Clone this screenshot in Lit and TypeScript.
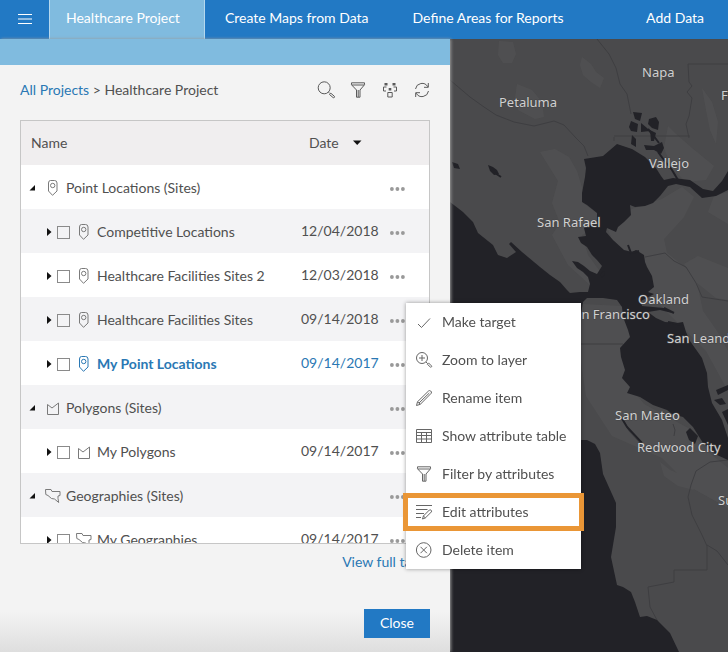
import { LitElement, html, css, svg, nothing } from "lit";
import { customElement, property, state } from "lit/decorators.js";

type Shape = "pin" | "polygon" | "geography";

interface Row {
  name: string;
  shape: Shape;
  group?: boolean;
  date?: string;
  target?: boolean;
}

const ROWS: Row[] = [
  { name: "Point Locations (Sites)", shape: "pin", group: true },
  { name: "Competitive Locations", shape: "pin", date: "12/04/2018" },
  { name: "Healthcare Facilities Sites 2", shape: "pin", date: "12/03/2018" },
  { name: "Healthcare Facilities Sites", shape: "pin", date: "09/14/2018" },
  { name: "My Point Locations", shape: "pin", date: "09/14/2017", target: true },
  { name: "Polygons (Sites)", shape: "polygon", group: true },
  { name: "My Polygons", shape: "polygon", date: "09/14/2017" },
  { name: "Geographies (Sites)", shape: "geography", group: true },
  { name: "My Geographies", shape: "geography", date: "09/14/2017" },
];

const GLYPHS = {
  pin: svg`<path d="M5.500 .5h4Q12 .5 12 3v8L7.500 15.300 3.500 11V3Q3.500 .5 5.500 .5z"/><circle cx="7.700" cy="5.500" r="2.200"/>`,
  polygon: svg`<path d="M2.500 14.500V4.500L7 8 13.500 3v11.500z"/>`,
  geography: svg`<path d="M.5 1.500H6l1 2h8v4l-2 .5v2.500l.7 4-4.200-3.500-3-.5L3 7.500.8 6.500z"/>`,
  caretRight: svg`<path class="solid" d="M5 4l4.500 4L5 12z"/>`,
  caretCorner: svg`<path class="solid" d="M10 5v5.500H4.500z"/>`,
  caretDown: svg`<path class="solid" d="M4 5.500h8.500L8.200 10z"/>`,
  dots: svg`<circle class="solid" cx="1.900" cy="9" r="1.900"/><circle class="solid" cx="7.400" cy="9" r="1.900"/><circle class="solid" cx="12.900" cy="9" r="1.900"/>`,
  search: svg`<circle cx="6.200" cy="5.800" r="6"/><path d="M10.500 10.200l1.300 1.300M11.500 12.500l1.300-1.300 3.500 3q.5.800 0 1.300t-1.300 0z"/>`,
  filter: svg`<path d="M1.500.8h13v2L10 8v7.200H6.500V8L1.500 2.800zM2 3h12M8.200 8v7"/>`,
  nodes: svg`<path d="M5.800 10.500h4.400v4.500H5.800zM4.500 5H1.500v4H4M11.500 5h3v4H12"/><path class="solid" d="M2.500 1h3v2.500h-3zM10.500 1h3v2.500h-3zM6.700 6h2.600v2.500H6.700z"/>`,
  refresh: svg`<path d="M1.500 7A6.600 6.600 0 0 1 13.800 4.800M14.500 9A6.600 6.600 0 0 1 2.200 11.200M14.300 1v4.300H10M1.700 15v-4.300H6"/>`,
  menu: svg`<path d="M1 2.500h14M1 7h14M1 11.500h14"/>`,
  check: svg`<path d="M2 10l3.500 3.500L14 4.500"/>`,
  zoom: svg`<circle cx="6" cy="6" r="5.500"/><path d="M3 6h6M6 3v6M10 10l1.500 1.500M11.300 12.200l1.200-1.300 3 3q.4.600-.1 1.100t-1.100 0z"/>`,
  pencil: svg`<path d="M.5 15.500l1-3.700L12.500 1q1-.9 2.200 0t.6 2.200L4.300 14.300zM1.500 11.800l2.800 2.500M3 13L13.300 3"/>`,
  table: svg`<path d="M.5 1.500h15v13H.5zM.5 4.500h15M.5 7.500h15M.5 11h15M5.500 4.500v10M10.500 4.500v10"/>`,
  edit: svg`<path d="M0 1.500h16M0 5.500h11.500M0 9.500h8M0 13.500h5M6.500 15l.9-3 6-6q.8-.5 1.700.2t.3 1.700l-6 6zM7.400 12l2 1.900"/>`,
  remove: svg`<circle cx="7.700" cy="8" r="7.300"/><path d="M4.500 4.800l6.400 6.400M10.900 4.800l-6.400 6.400"/>`,
};

type Glyph = keyof typeof GLYPHS;

@customElement("line-icon")
class LineIcon extends LitElement {
  @property() name: Glyph = "pin";

  static styles = css`
    :host {
      display: block;
      flex: none;
      width: 16px;
      height: 16px;
    }
    .glyph {
      display: block;
      width: 100%;
      height: 100%;
      fill: none;
      stroke: currentColor;
      stroke-width: 1;
      overflow: visible;
    }
    .solid {
      fill: currentColor;
      stroke: none;
    }
  `;

  render() {
    return html`<svg class="glyph" viewBox="0 0 16 16" aria-hidden="true">${GLYPHS[this.name]}</svg>`;
  }
}

const CITIES = [
  { name: "Napa", x: 642, y: 77 },
  { name: "Petaluma", x: 499, y: 107 },
  { name: "Fairfield", x: 721, y: 100 },
  { name: "Vallejo", x: 649, y: 168 },
  { name: "San Rafael", x: 537, y: 227 },
  { name: "Oakland", x: 638, y: 304 },
  { name: "San Francisco", x: 567, y: 319 },
  { name: "San Leandro", x: 667, y: 343 },
  { name: "San Mateo", x: 615, y: 420 },
  { name: "Redwood City", x: 637, y: 452 },
  { name: "Sunnyvale", x: 718, y: 505 },
];

@customElement("bay-map")
class BayMap extends LitElement {
  static styles = css`
    :host {
      display: block;
      position: relative;
      overflow: hidden;
      background: #4a4a4c;
    }
    .canvas {
      position: absolute;
      inset: 0;
      width: 100%;
      height: 100%;
    }
    .urban {
      fill: #535355;
      opacity: 0.6;
    }
    .water {
      fill: #222227;
    }
    .ink {
      fill: none;
      stroke: #222227;
      stroke-width: 2;
    }
    .border {
      fill: none;
      stroke: #3e3e41;
      stroke-width: 1;
    }
    .city {
      font: 13px "Noto Sans", "Open Sans", sans-serif;
      fill: #d0d0d0;
      stroke: #444446;
      stroke-width: 1;
      paint-order: stroke;
    }
  `;

  render() {
    return html`
      <svg class="canvas" viewBox="450 39 278 613" preserveAspectRatio="xMinYMin slice" role="img" aria-label="San Francisco Bay Area">
        <path class="urban" d="M499 41l14 1 3 12-4 9-9 0-5-8zM582 57l9 7 5 8 8 6-4 10-9-6-8-7-3-10zM517 84l15 6 10 12 2 15-9 2-17-9-3-12zM540 152l15-3 14 8 8 14 6 20 0 12 14 10-1 14-14 8 6 20 16 22-14 8-22-20-16-30 8-12-8-20 6-22zM702 88l10 14 6 20-2 22-6-14-4-20zM668 126l8 8 16 14 22 18-8 14-20 2-14-14-8-20z"/>
        <path class="urban" d="M608 229l24-20 30-10 20-12 12 10-10 20-20 22 3 14 20 16 10 14 6 28 14 20 11 20v40l-22-40-60-60-30-40zM728 268l-30-12-14 8 12 18 20 16 12 2zM728 192l-14 4-6 16 20 12zM582 304l40 2 10 34-8 40 20 24 44 24 20 24 20 16v40l-36-20-30-30-50-22-26-40-6-40zM660 462l10 8 14 6 10 14-16-4-14-10z"/>
        <path class="border" d="M450 80l20 17 14 10 12 8 18 7 20 4 20-5 10 4 12 13 8 8 4 10M597 39l12 15 7 14 4 16 7 10 4 20M728 64h-40l1 18 3 4-5 6 5 6-3 18-3 8 3 14M614 136h76M614 137v4M581 344h42M645 257l20-4 9 8 12 6 10 16 6 14 26 4M646 322l8 16"/>
        <path class="border" d="M728 460l-18 2-14 9-5 14-3 12 4 18 10 20 5 11v24h-33v12l-26 5 2 20 14 26M707 545l10 6 11 14M624 421l5 10 14 15M673 424l2 6-1 6"/>
        <path class="water" d="M450 202L463 212 473 222 478 233 493 245 498 255 507 258 516 252 509 244 511 242 522 252 528 257 540 267 550 275 560 282 567 290 570 293 580 292 588 292 590 284 588 277 583 272 577 268 572 261 578 262 584 266 590 271 597 274 602 266 597 260 592 255 587 247 581 243 578 237 586 236 584 228 597 221 597 213 587 205 582 202 582 193 585 177 586 168 584 159 603 156 617 144 632 149 645 157 656 168 661 176 664 180 673 178 690 180 703 189 713 191 722 181 728 171 728 190 716 196 702 198 690 187 676 184 668 186 660 196 653 203 645 206 635 207 630 205 631 215 624 222 618 227 616 232 607 228 606 232 613 240 624 250 632 252 636 250 644 255 645 262 647 267 652 276 654 287 648 292 654 294 641 301 642 306 664 308 672 313 660 310 648 312 656 318 665 322 677 323 683 322 686 332 690 341 702 358 707 373 708 387 712 403 722 420 728 438 728 460 717 455 703 443 693 427 683 417 672 414 667 410 653 405 640 397 627 393 630 387 622 378 625 370 621 357 620 348 630 337 628 330 623 317 622 307 617 300 603 298 587 298 583 302 580 320 580 440 587 440 595 444 600 453 603 474 612 494 616 503 616 527 611 557 617 585 623 587 631 592 635 602 640 617 647 616 657 620 670 633 679 652 450 652z"/>
        <path class="water" d="M633 112l9 1-2 8-5-2zM631 121l7 3-1 8-6-1-2-4zM641 123l6 5 3 3-9 1zM649 119l7-2 3 5-1 8-6-2-4-4zM650 130l6 3-2 8-3 0zM632 135l4 4 0 8-5-3zM644 145l10 1 8-4 2 6-3 6-7-4-8 0zM716 390l12-5v5l-10 5zM714 400l8-2 4 6-6 1zM722 412l6-3v16zM686 432l4-4 8 8-3 8-6-4zM452 162l6 2 2 5-6-1zM488 165l5 2 4 3 2 4-5 1-4-4zM600 274l4-3 1 3-3 4z"/>
        <path class="ink" d="M648 129l5 6 6 8M658 152l6 8 8 10 6 10M621 417l6 10 15 16M495 173l6 4M664 308l10 5M668 322l14 3M628 245l3 8 8-2"/>
        ${CITIES.map((c) => svg`<text class="city" x=${c.x} y=${c.y}>${c.name}</text>`)}
      </svg>
    `;
  }
}

const ACTIONS: { label: string; icon: Glyph; marked?: boolean }[] = [
  { label: "Make target", icon: "check" },
  { label: "Zoom to layer", icon: "zoom" },
  { label: "Rename item", icon: "pencil" },
  { label: "Show attribute table", icon: "table" },
  { label: "Filter by attributes", icon: "filter" },
  { label: "Edit attributes", icon: "edit", marked: true },
  { label: "Delete item", icon: "remove" },
];

const TOOLS: { label: string; icon: Glyph }[] = [
  { label: "Search", icon: "search" },
  { label: "Filter", icon: "filter" },
  { label: "Group", icon: "nodes" },
  { label: "Refresh", icon: "refresh" },
];

@customElement("app-root")
class AppRoot extends LitElement {
  @state() private menuOpen = true;

  static styles = css`
    :host {
      display: flex;
      flex-direction: column;
      min-height: 100vh;
      overflow: hidden;
      font: 14px/20px Lato, "Open Sans", sans-serif;
      color: #505050;
      background: #f3f3f3;
    }
    * {
      box-sizing: border-box;
    }
    button {
      font: inherit;
      color: inherit;
      background: none;
      border: 0;
      padding: 0;
      cursor: pointer;
    }
    a {
      color: #2a78b4;
      text-decoration: none;
    }
    .bar {
      display: flex;
      height: 39px;
      background: #2279c4;
      color: #fff;
    }
    .burger {
      display: grid;
      place-items: center;
      width: 49px;
    }
    .tabs {
      display: flex;
      flex: 1;
    }
    .tab {
      padding: 8px 24px 0 20px;
      color: #fff;
      white-space: nowrap;
    }
    .tab.current {
      padding-left: 16px;
      background: #80bbdf;
      border: 1px solid #b5d8ee;
      border-width: 0 1px;
    }
    .tab.last {
      margin-left: auto;
    }
    .body {
      flex: 1;
      display: grid;
      grid-template-columns: minmax(0, 450px) minmax(0, 1fr);
    }
    .panel {
      position: relative;
      z-index: 1;
      display: flex;
      flex-direction: column;
      border-top: 26px solid #80bbdf;
      background: linear-gradient(to top, #dedede, #f3f3f3 40px);
      box-shadow: 1px 0 3px #9a9a9a;
    }
    .content {
      display: flex;
      flex-direction: column;
      padding: 12px 20px 14px;
    }
    .head {
      display: flex;
      align-items: center;
      justify-content: space-between;
      height: 25px;
      margin-bottom: 18px;
    }
    .tools {
      display: flex;
      gap: 16px;
      color: #5a5a5a;
    }
    .frame {
      position: relative;
    }
    .scroll {
      max-height: 424px;
      overflow: hidden auto;
      scrollbar-width: none;
      border: 1px solid #c6c6c6;
    }
    .layers {
      width: 100%;
      border-collapse: collapse;
      table-layout: fixed;
      background: #fff;
    }
    .layers th {
      height: 44px;
      padding: 0 0 0 10px;
      font-weight: 400;
      text-align: left;
      background: #f0eeef;
    }
    .layers td {
      height: 44px;
      padding: 2px 0 0;
    }
    .layers tr:nth-child(even) td {
      background: #f3f3f5;
    }
    .col-date {
      width: 79px;
    }
    .col-more {
      width: 49px;
    }
    .sort {
      display: flex;
      align-items: center;
      gap: 10px;
      margin-left: -2px;
    }
    .sort line-icon,
    .twist {
      color: #111;
    }
    .cell {
      display: flex;
      align-items: center;
      padding-left: 21px;
      white-space: nowrap;
    }
    .cell.group {
      padding-left: 4px;
    }
    .twist {
      display: grid;
      place-items: center;
      width: 14px;
      margin-right: 1px;
    }
    .group .twist {
      margin-right: 6px;
    }
    .tick {
      appearance: none;
      width: 13px;
      height: 13px;
      margin: 0 6px 0 0;
      border: 1px solid #8a8a8a;
      background: transparent;
    }
    .tick:checked {
      background: #2279c4;
    }
    .shape {
      color: #7a7a7a;
    }
    .name {
      margin-left: 5px;
    }
    .target,
    .target .shape {
      color: #2a78b4;
    }
    .target .name {
      font-weight: 700;
    }
    .layers td.date {
      padding: 0;
    }
    .more {
      display: block;
      margin-left: 10px;
      color: #999;
    }
    .foot {
      display: flex;
      flex-direction: column;
      align-items: flex-end;
      gap: 37px;
      padding-top: 8px;
    }
    .close {
      padding: 4px 16px 5px;
      background: #2279c4;
      color: #fff;
    }
    .menu {
      position: absolute;
      top: 183px;
      left: calc(100% - 24px);
      margin: 0;
      padding: 0;
      width: 175px;
      list-style: none;
      background: #fff;
      box-shadow: 0 0 4px #0006;
    }
    .entry {
      position: relative;
    }
    .entry.marked::after {
      content: "";
      position: absolute;
      inset: 0 -3px;
      border: 5px solid #ea9636;
      pointer-events: none;
    }
    .action {
      display: flex;
      align-items: center;
      gap: 10px;
      width: 100%;
      height: 38px;
      padding-left: 10px;
      white-space: nowrap;
    }
    .action line-icon {
      color: #666;
    }
  `;

  private row(r: Row) {
    return html`
      <tr class=${r.target ? "target" : "plain"}>
        <td>
          <div class="cell ${r.group ? "group" : ""}">
            <button class="twist" aria-label="Expand ${r.name}">
              <line-icon name=${r.group ? "caretCorner" : "caretRight"}></line-icon>
            </button>
            ${r.group ? nothing : html`<input class="tick" type="checkbox" aria-label=${r.name} />`}
            <line-icon class="shape" name=${r.shape}></line-icon>
            <span class="name">${r.name}</span>
          </div>
        </td>
        <td class="date">${r.date ?? nothing}</td>
        <td>
          <button class="more" aria-label="Options for ${r.name}" @click=${() => (this.menuOpen = !this.menuOpen)}>
            <line-icon name="dots"></line-icon>
          </button>
        </td>
      </tr>
    `;
  }

  render() {
    return html`
      <header class="bar">
        <button class="burger" aria-label="Menu"><line-icon name="menu"></line-icon></button>
        <nav class="tabs">
          <a class="tab current" href="#project">Healthcare Project</a>
          <a class="tab" href="#maps">Create Maps from Data</a>
          <a class="tab" href="#areas">Define Areas for Reports</a>
          <a class="tab last" href="#data">Add Data</a>
        </nav>
      </header>
      <div class="body">
        <section class="panel">
          <div class="content">
            <div class="head">
              <div><a href="#all">All Projects</a> &gt; Healthcare Project</div>
              <div class="tools">
                ${TOOLS.map((t) => html`<button aria-label=${t.label}><line-icon name=${t.icon}></line-icon></button>`)}
              </div>
            </div>
            <div class="frame">
              <div class="scroll">
                <table class="layers">
                  <colgroup>
                    <col />
                    <col class="col-date" />
                    <col class="col-more" />
                  </colgroup>
                  <thead>
                    <tr>
                      <th>Name</th>
                      <th><button class="sort">Date <line-icon name="caretDown"></line-icon></button></th>
                      <th></th>
                    </tr>
                  </thead>
                  <tbody>
                    ${ROWS.map((r) => this.row(r))}
                  </tbody>
                </table>
              </div>
              ${this.menuOpen
                ? html`<ul class="menu">
                    ${ACTIONS.map(
                      (a) => html`<li class="entry ${a.marked ? "marked" : ""}">
                        <button class="action"><line-icon name=${a.icon}></line-icon>${a.label}</button>
                      </li>`
                    )}
                  </ul>`
                : nothing}
            </div>
            <div class="foot">
              <a href="#table">View full table</a>
              <button class="close">Close</button>
            </div>
          </div>
        </section>
        <bay-map></bay-map>
      </div>
    `;
  }
}
